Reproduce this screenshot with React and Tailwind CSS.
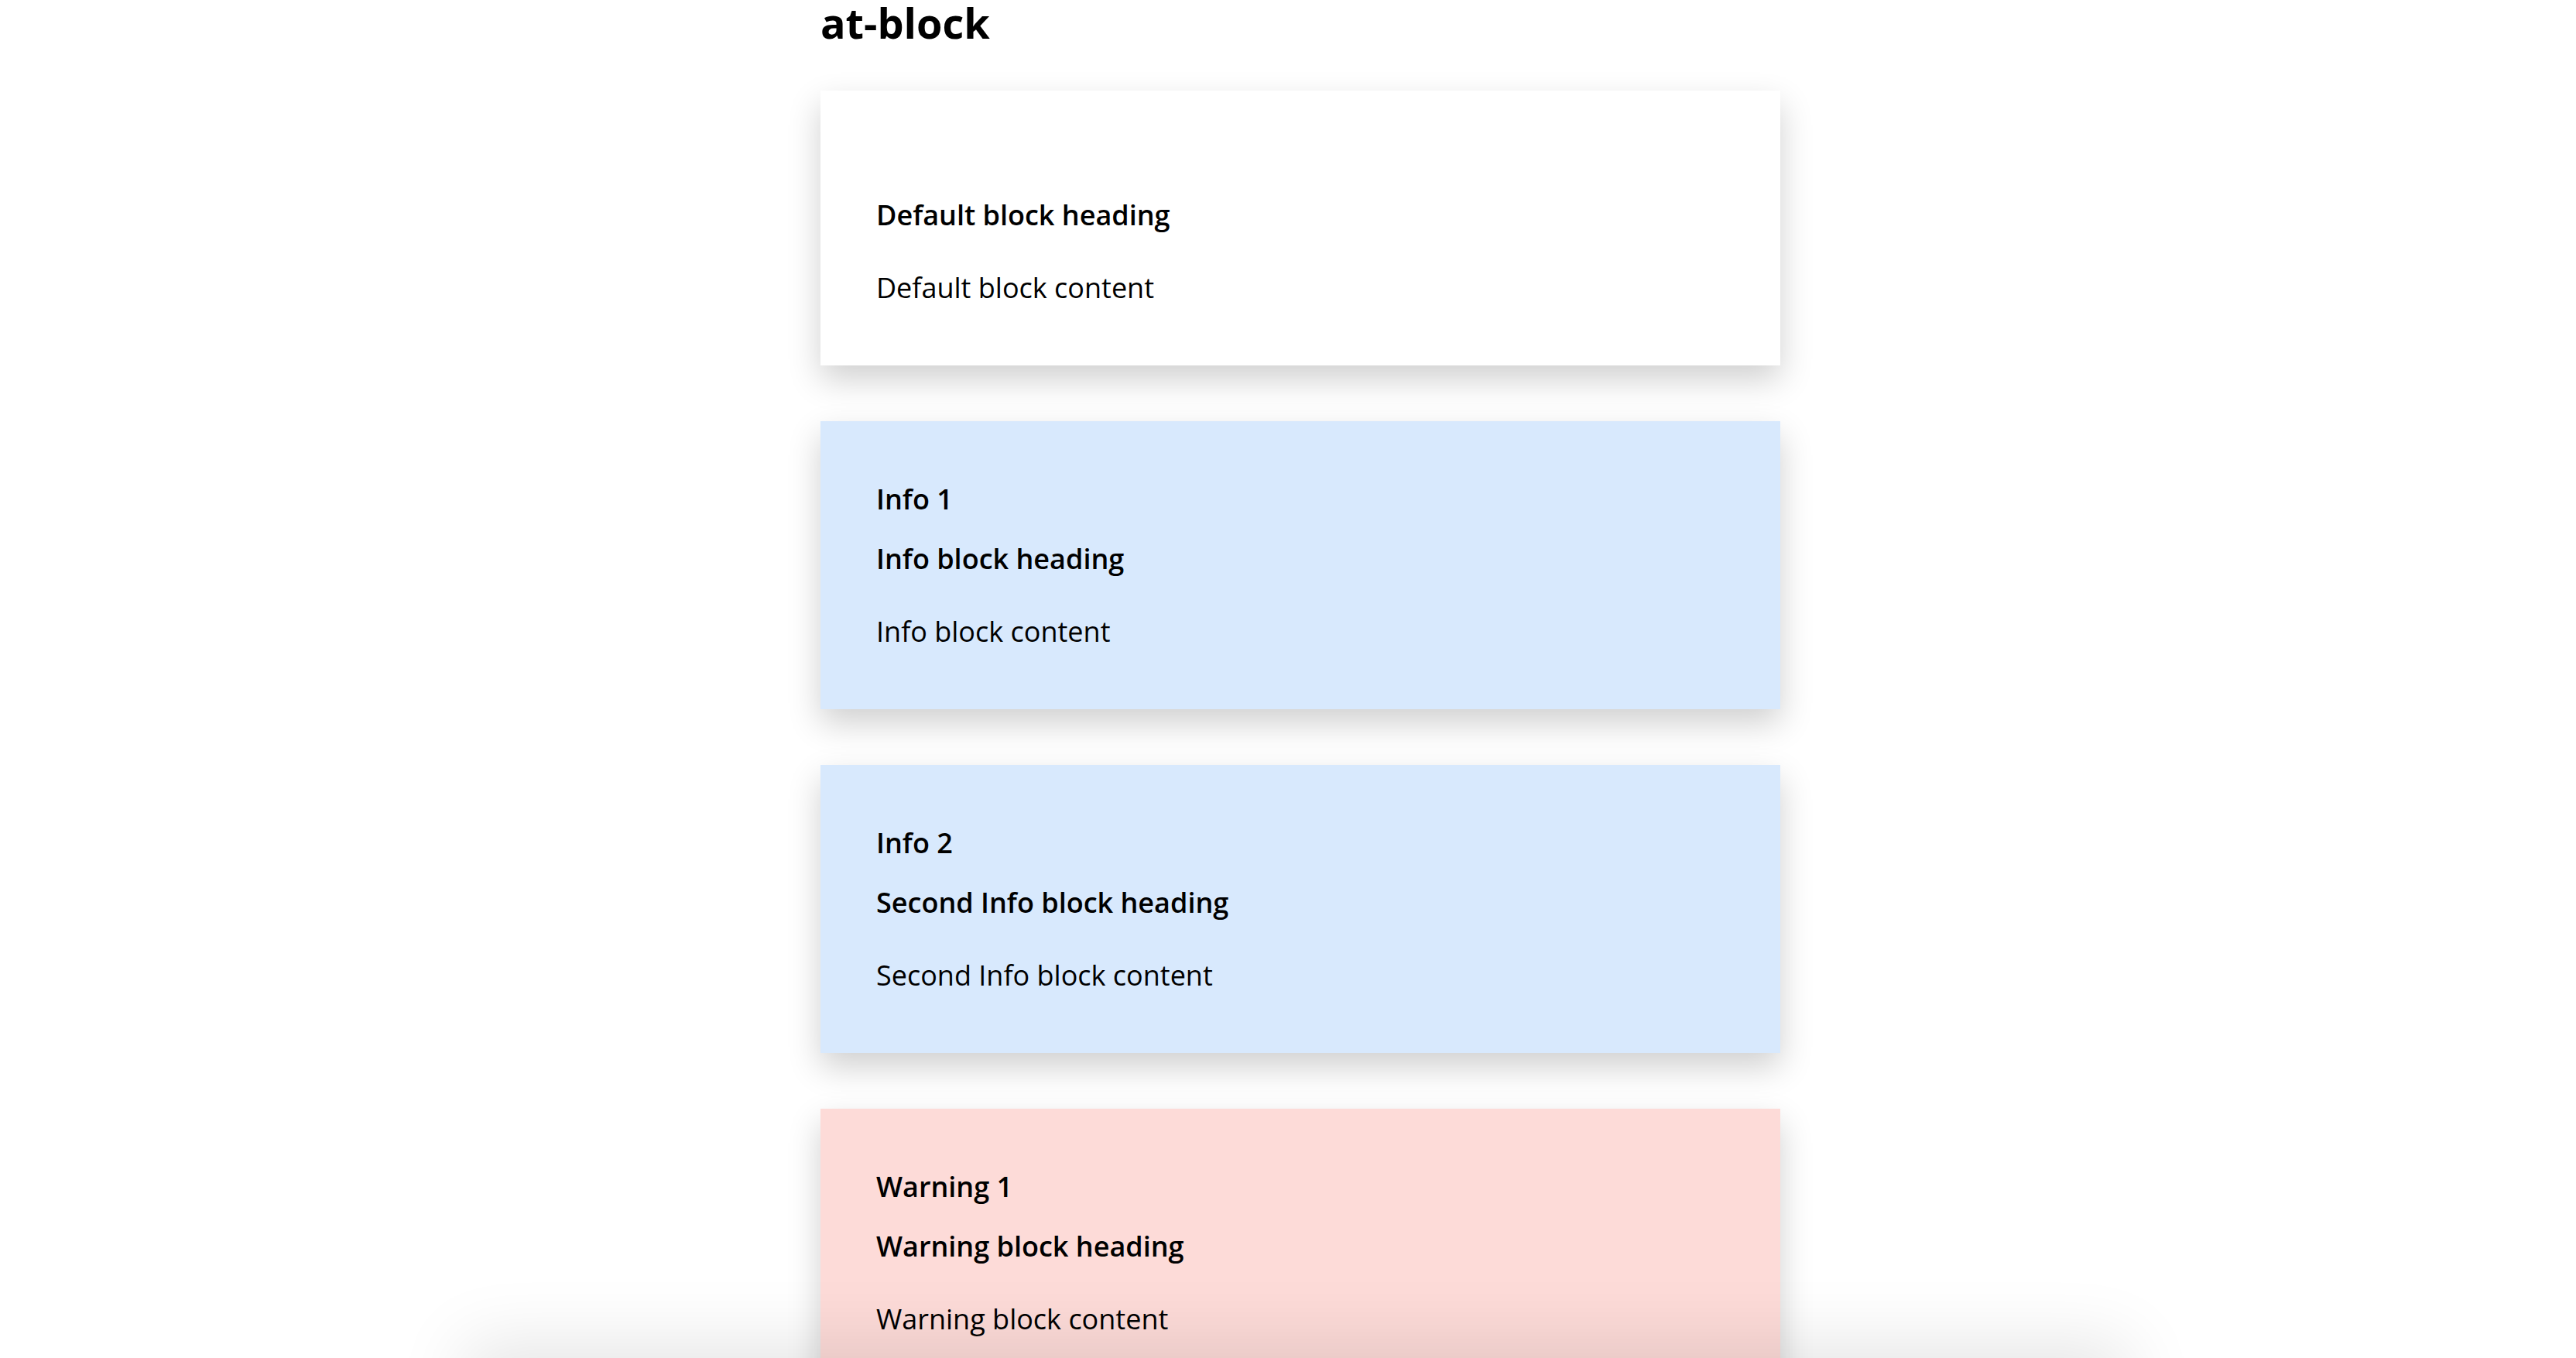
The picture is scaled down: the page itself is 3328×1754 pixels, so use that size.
import React from "react";

const BLOCKS = [
  { label: "", heading: "Default block heading", content: "Default block content", tone: "bg-white" },
  { label: "Info 1", heading: "Info block heading", content: "Info block content", tone: "bg-[#d8e9fd]" },
  { label: "Info 2", heading: "Second Info block heading", content: "Second Info block content", tone: "bg-[#d8e9fd]" },
  { label: "Warning 1", heading: "Warning block heading", content: "Warning block content", tone: "bg-[#fddbd8]" },
];

function Block({ label, heading, content, tone }) {
  return (
    <div
      className={`${tone} pt-[74px] pb-[73px] px-[72px] shadow-[0_18px_40px_rgba(0,0,0,0.19)]`}
    >
      {/* label slot keeps some height even when empty */}
      <div className="min-h-[37px] mb-[23px] text-[36px] leading-[54px] font-semibold">
        {label}
      </div>
      <div className="text-[36px] leading-[54px] font-semibold mb-[40px]">{heading}</div>
      <div className="text-[36px] leading-[54px]">{content}</div>
    </div>
  );
}

export default function App() {
  return (
    <div
      className="min-h-screen bg-white text-black"
      style={{ fontFamily: '"Open Sans", "Noto Sans", sans-serif' }}
    >
      <div className="pl-[1060px] pb-[120px]">
        <div className="w-[1240px]">
          <h1 className="pt-[8px] text-[54px] leading-[42px] font-bold mb-[67px]">at-block</h1>
          <div className="flex flex-col gap-[72px]">
            {BLOCKS.map((b) => (
              <Block key={b.heading} {...b} />
            ))}
          </div>
        </div>
      </div>

      {/* bar sitting just below the viewport, its shadow bleeds upward */}
      <div className="fixed top-full left-[620px] w-[2110px] h-[200px] bg-white shadow-[0_0_90px_20px_rgba(0,0,0,0.1)] z-10" />
    </div>
  );
}
